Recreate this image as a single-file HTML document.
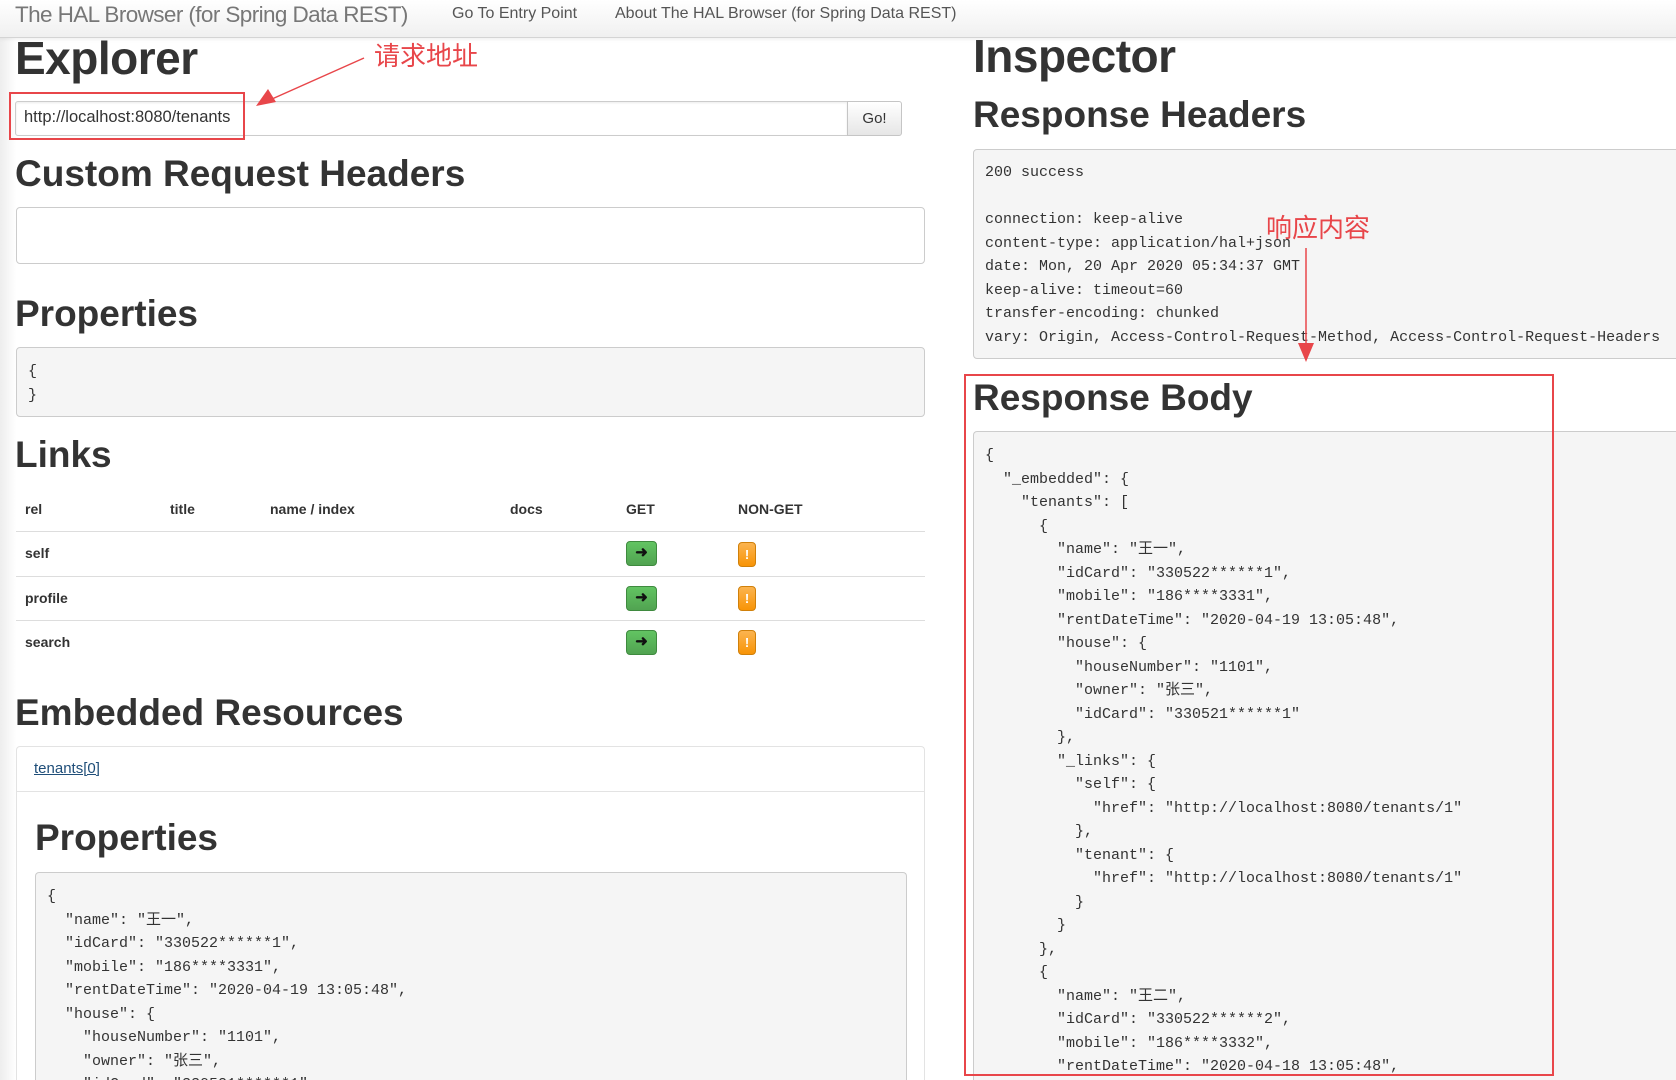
<!DOCTYPE html>
<html style="overflow:hidden;height:1080px"><head><meta charset="utf-8">
<style>
*{box-sizing:border-box;margin:0;padding:0}
body{width:1676px;height:1080px;overflow:hidden;background:#fff;font-family:"Liberation Sans","Noto Sans CJK SC",sans-serif;color:#333;position:relative}
.a{position:absolute;white-space:nowrap}
.nav{left:0;top:0;width:1676px;height:38px;background:linear-gradient(#fff,#f0f0f0);border-bottom:1px solid #d4d4d4;box-shadow:0 1px 4px rgba(0,0,0,.08)}
.h1{font-weight:bold;font-size:46px;line-height:1;color:#333;letter-spacing:-0.5px}
.h2{font-weight:bold;font-size:37px;line-height:1;color:#333}
pre,.pre{font-family:"Liberation Mono","Noto Sans CJK SC",monospace;font-size:15px;line-height:23.5px;color:#333;white-space:pre!important}
.box{background:#f5f5f5;border:1px solid #ccc;border-radius:4px}
.th{font-size:14px;font-weight:bold;color:#333}
.td{font-size:14px;font-weight:bold;color:#333}
.hr{height:1px;background:#ddd;left:16px;width:909px}
.g{width:31px;height:25px;background:linear-gradient(#62c462,#51a351);border:1px solid #3f8a3f;border-radius:4px;color:#111;font-size:15px;text-align:center;line-height:22px;font-weight:bold}
.o{width:18px;height:25px;background:linear-gradient(#fbb450,#f89406);border:1px solid #d0800a;border-radius:4px;color:#fff;font-size:13px;text-align:center;line-height:23px;font-weight:bold}
.red{color:#e8464a;font-family:"Noto Sans CJK SC",sans-serif;font-size:26px}
</style></head><body>
<div class="a" style="left:0;top:38px;width:16px;height:1042px;background:linear-gradient(90deg,#ededed,#fff)"></div>
<div class="a nav"></div>
<div class="a" style="left:15px;top:2px;font-size:22.5px;color:#777;font-weight:300;letter-spacing:-0.6px">The HAL Browser (for Spring Data REST)</div>
<div class="a" style="left:452px;top:5px;font-size:16px;color:#555">Go To Entry Point</div>
<div class="a" style="left:615px;top:5px;font-size:16px;color:#555">About The HAL Browser (for Spring Data REST)</div>

<div class="a h1" style="left:15px;top:35px">Explorer</div>
<div class="a" style="left:15px;top:101px;width:833px;height:35px;border:1px solid #ccc;border-radius:3px 0 0 3px;background:#fff;box-shadow:inset 0 1px 2px rgba(0,0,0,.08)"></div>
<div class="a" style="left:24px;top:108px;font-size:16.5px;color:#333">http://localhost:8080/tenants</div>
<div class="a" style="left:847px;top:101px;width:55px;height:35px;border:1px solid #c5c5c5;border-radius:0 3px 3px 0;background:linear-gradient(#fff,#e6e6e6);font-size:15px;text-align:center;line-height:33px">Go!</div>
<div class="a" style="left:9px;top:92px;width:236px;height:48px;border:2px solid #e8464a"></div>
<div class="a red" style="left:374px;top:36px">请求地址</div>

<div class="a h2" style="left:15px;top:155px">Custom Request Headers</div>
<div class="a" style="left:16px;top:207px;width:909px;height:57px;border:1px solid #ccc;border-radius:4px;background:#fff"></div>
<div class="a h2" style="left:15px;top:295px">Properties</div>
<div class="a box" style="left:16px;top:347px;width:909px;height:70px"></div>
<pre class="a" style="left:28px;top:360px">{
}</pre>
<div class="a h2" style="left:15px;top:436px">Links</div>
<div class="a th" style="left:25px;top:501px">rel</div>
<div class="a th" style="left:170px;top:501px">title</div>
<div class="a th" style="left:270px;top:501px">name / index</div>
<div class="a th" style="left:510px;top:501px">docs</div>
<div class="a th" style="left:626px;top:501px">GET</div>
<div class="a th" style="left:738px;top:501px">NON-GET</div>
<div class="a hr" style="top:531px"></div>
<div class="a td" style="left:25px;top:545px">self</div>
<div class="a g" style="left:626px;top:541px">➜</div><div class="a o" style="left:738px;top:542px">!</div>
<div class="a hr" style="top:576px"></div>
<div class="a td" style="left:25px;top:590px">profile</div>
<div class="a g" style="left:626px;top:586px">➜</div><div class="a o" style="left:738px;top:586px">!</div>
<div class="a hr" style="top:620px"></div>
<div class="a td" style="left:25px;top:634px">search</div>
<div class="a g" style="left:626px;top:630px">➜</div><div class="a o" style="left:738px;top:630px">!</div>

<div class="a h2" style="left:15px;top:694px">Embedded Resources</div>
<div class="a" style="left:16px;top:746px;width:909px;height:334px;border:1px solid #e3e3e3;border-bottom:none;border-radius:4px 4px 0 0"></div>
<div class="a" style="left:34px;top:760px;font-size:15px;color:#1f4e79;text-decoration:underline">tenants[0]</div>
<div class="a" style="left:17px;top:791px;width:907px;height:1px;background:#e3e3e3"></div>
<div class="a h2" style="left:35px;top:819px">Properties</div>
<div class="a box" style="left:35px;top:872px;width:872px;height:208px;border-bottom:none;border-radius:4px 4px 0 0"></div>
<pre class="a" style="left:47px;top:885px;height:195px;overflow:hidden">{
  "name": "王一",
  "idCard": "330522******1",
  "mobile": "186****3331",
  "rentDateTime": "2020-04-19 13:05:48",
  "house": {
    "houseNumber": "1101",
    "owner": "张三",
    "idCard": "330521******1"</pre>

<div class="a h1" style="left:973px;top:33px">Inspector</div>
<div class="a h2" style="left:973px;top:96px">Response Headers</div>
<div class="a box" style="left:973px;top:149px;width:720px;height:210px"></div>
<pre class="a" style="left:985px;top:161px">200 success

connection: keep-alive
content-type: application/hal+json
date: Mon, 20 Apr 2020 05:34:37 GMT
keep-alive: timeout=60
transfer-encoding: chunked
vary: Origin, Access-Control-Request-Method, Access-Control-Request-Headers</pre>
<div class="a red" style="left:1266px;top:208px">响应内容</div>
<div class="a h2" style="left:973px;top:379px">Response Body</div>
<div class="a box" style="left:973px;top:431px;width:720px;height:649px;border-bottom:none;border-radius:4px 0 0 0"></div>
<pre class="a" style="left:985px;top:444px;height:636px;overflow:hidden">{
  "_embedded": {
    "tenants": [
      {
        "name": "王一",
        "idCard": "330522******1",
        "mobile": "186****3331",
        "rentDateTime": "2020-04-19 13:05:48",
        "house": {
          "houseNumber": "1101",
          "owner": "张三",
          "idCard": "330521******1"
        },
        "_links": {
          "self": {
            "href": "http://localhost:8080/tenants/1"
          },
          "tenant": {
            "href": "http://localhost:8080/tenants/1"
          }
        }
      },
      {
        "name": "王二",
        "idCard": "330522******2",
        "mobile": "186****3332",
        "rentDateTime": "2020-04-18 13:05:48",</pre>
<div class="a" style="left:964px;top:374px;width:590px;height:702px;border:2px solid #e8464a"></div>
<svg class="a" style="left:0;top:0" width="1676" height="1080"><line x1="364" y1="58" x2="272" y2="99" stroke="#e8464a" stroke-width="1.5"/><polygon points="256,106 268,89 276,102" fill="#e8464a"/>
<line x1="1306" y1="248" x2="1306" y2="345" stroke="#e8464a" stroke-width="1.5"/><polygon points="1298,343 1314,343 1306,362" fill="#e8464a"/></svg>
</body></html>
